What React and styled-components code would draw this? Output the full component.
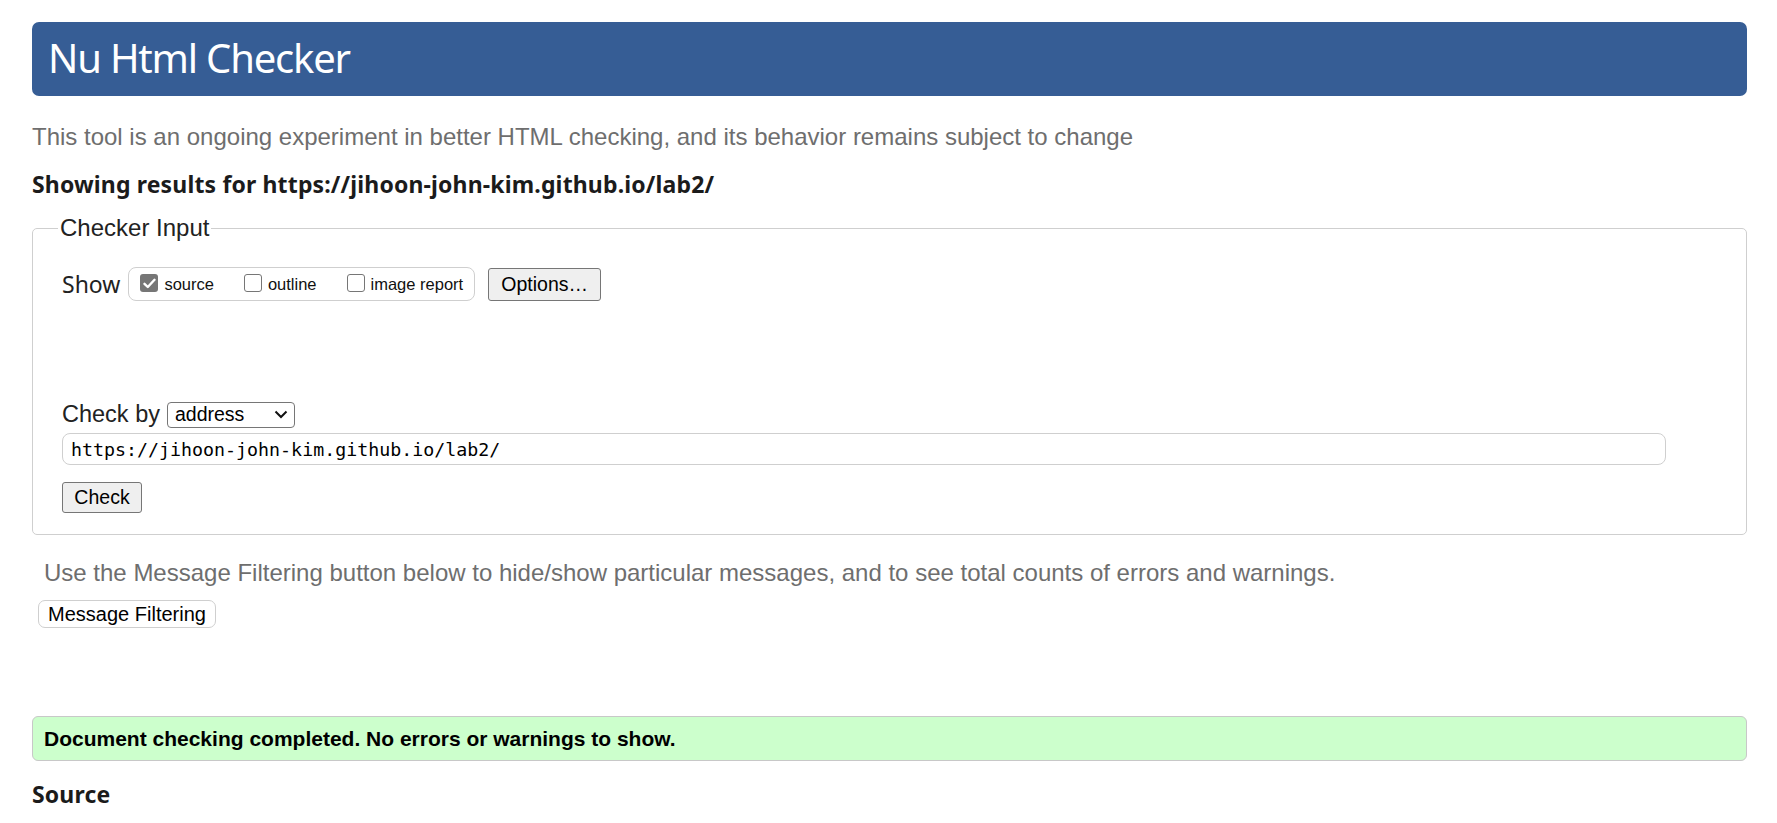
import React from "react";
import styled, { createGlobalStyle } from "styled-components";

const Global = createGlobalStyle`
  html, body { margin: 0; padding: 0; background: #fff; }
  body { font-family: "Liberation Sans", Arial, sans-serif; color: #000; }
  * { box-sizing: border-box; }
`;

const Page = styled.div`
  padding: 22px 30px 40px 32px;
`;

const Header = styled.h1`
  margin: 0;
  height: 74px;
  line-height: 72px;
  padding: 0 16px;
  background: #365d95;
  border-radius: 7px;
  color: #fff;
  font-family: "Noto Sans", "Open Sans", sans-serif;
  font-weight: 400;
  font-size: 40px;
  letter-spacing: -1.2px;
`;

const Lead = styled.p`
  margin: ${(p) => p.$mt}px 0 0 ${(p) => p.$ml || 0}px;
  font-family: "Liberation Sans", Arial, sans-serif;
  font-size: ${(p) => p.$size}px;
  line-height: ${(p) => p.$lh}px;
  color: #6e6e6e;
`;

const Heading = styled.h2`
  margin: ${(p) => p.$mt}px 0 0 0;
  font-family: "Noto Sans", "Open Sans", sans-serif;
  font-weight: 700;
  font-size: 23px;
  line-height: 30px;
  color: #1b1b1b;
  letter-spacing: 0.15px;
`;

const Fieldset = styled.fieldset`
  margin: 15px 0 0 0;
  padding: 25px 29px 21px 29px;
  border: 1px solid #cfcfcf;
  border-radius: 5px;
  min-width: 0;
`;

const Legend = styled.legend`
  margin-left: -4px;
  padding: 0 2px;
  font-family: "Liberation Sans", Arial, sans-serif;
  font-size: 24px;
  line-height: 28px;
  color: #222;
`;

const Row = styled.div`
  display: flex;
  align-items: center;
  height: ${(p) => p.$h}px;
  margin-top: ${(p) => p.$mt || 0}px;
`;

const ShowLabel = styled.span`
  font-family: "Noto Sans", "Open Sans", sans-serif;
  font-size: 23px;
  color: #222;
  margin-right: 8px;
  line-height: 30px;
`;

const OptionGroup = styled.div`
  display: flex;
  align-items: center;
  height: 34px;
  padding: 0 11px 0 11px;
  border: 1px solid #cfcfcf;
  border-radius: 8px;
`;

const OptionLabel = styled.label`
  display: flex;
  align-items: center;
  gap: 6px;
  margin-left: ${(p) => p.$ml || 0}px;
  font-family: "Liberation Sans", Arial, sans-serif;
  font-size: 16.5px;
  color: #111;
  line-height: 20px;
`;

const Box = styled.span`
  display: inline-flex;
  align-items: center;
  justify-content: center;
  width: 18px;
  height: 18px;
  border-radius: 3px;
  border: ${(p) => (p.$checked ? "none" : "1px solid #767676")};
  background: ${(p) => (p.$checked ? "#767676" : "#fff")};
  position: relative;
  top: -1px;
`;

const Button = styled.button`
  display: inline-flex;
  align-items: center;
  justify-content: center;
  width: ${(p) => p.$w}px;
  height: ${(p) => p.$h}px;
  margin: ${(p) => p.$m || 0};
  padding: 0;
  font-family: "Liberation Sans", Arial, sans-serif;
  font-size: ${(p) => p.$fs || 19.5}px;
  color: #000;
  background: ${(p) => (p.$soft ? "#fff" : "#efefef")};
  border: 1px solid ${(p) => (p.$soft ? "#cfcfcf" : "#767676")};
  border-radius: ${(p) => (p.$soft ? 7 : 3)}px;
`;

const CheckByLabel = styled.span`
  font-family: "Liberation Sans", Arial, sans-serif;
  font-size: 23.5px;
  line-height: 27px;
  color: #222;
  margin-right: 7px;
`;

const SelectBox = styled.div`
  display: flex;
  align-items: center;
  justify-content: space-between;
  width: 128px;
  height: 26px;
  padding: 0 6px 0 7px;
  border: 1px solid #767676;
  border-radius: 4px;
  background: #fff;
  font-family: "Liberation Sans", Arial, sans-serif;
  font-size: 19.5px;
  color: #000;
`;

const UrlInput = styled.div`
  display: flex;
  align-items: center;
  width: calc(100% - 51px);
  height: 32px;
  margin-top: 5px;
  padding-left: 8px;
  border: 1px solid #cfcfcf;
  border-radius: 8px;
  font-family: "DejaVu Sans Mono", "Liberation Mono", monospace;
  font-size: 18.3px;
  color: #000;
`;

const Success = styled.div`
  margin-top: 88px;
  padding: 10px 11px 9px 11px;
  background: #ccffcc;
  border: 1px solid #c8c8c8;
  border-radius: 6px;
  font-family: "Liberation Sans", Arial, sans-serif;
  font-weight: 700;
  font-size: 21px;
  line-height: 24px;
  color: #000;
`;

function Checkbox({ checked }) {
  return (
    <Box $checked={checked}>
      {checked && (
        <svg width="13" height="11" viewBox="0 0 13 11">
          <path d="M1.5 5.8 L4.8 9 L11.5 1.8" fill="none" stroke="#fff" strokeWidth="2.4" strokeLinecap="round" strokeLinejoin="round" />
        </svg>
      )}
    </Box>
  );
}

export default function App() {
  return (
    <>
      <Global />
      <Page>
        <Header>Nu Html Checker</Header>
        <Lead $mt={27} $size={24} $lh={27}>
          This tool is an ongoing experiment in better HTML checking, and its behavior remains subject to change
        </Lead>
        <Heading $mt={19}>Showing results for https://jihoon-john-kim.github.io/lab2/</Heading>
        <Fieldset>
          <Legend>Checker Input</Legend>
          <Row $h={34}>
            <ShowLabel>Show</ShowLabel>
            <OptionGroup>
              <OptionLabel>
                <Checkbox checked />
                source
              </OptionLabel>
              <OptionLabel $ml={30}>
                <Checkbox />
                outline
              </OptionLabel>
              <OptionLabel $ml={30}>
                <Checkbox />
                image report
              </OptionLabel>
            </OptionGroup>
            <Button $w={113} $h={33} $m="0 0 0 13px">Options…</Button>
          </Row>
          <Row $h={27} $mt={100}>
            <CheckByLabel>Check by</CheckByLabel>
            <SelectBox>
              <span>address</span>
              <svg width="14" height="9" viewBox="0 0 14 9">
                <path d="M1.5 1.5 L7 7 L12.5 1.5" fill="none" stroke="#111" strokeWidth="2" />
              </svg>
            </SelectBox>
          </Row>
          <UrlInput>https://jihoon-john-kim.github.io/lab2/</UrlInput>
          <Button $w={80} $h={31} $m="17px 0 0 0">Check</Button>
        </Fieldset>
        <Lead $mt={24} $ml={12} $size={24} $lh={28}>
          Use the Message Filtering button below to hide/show particular messages, and to see total counts of errors and warnings.
        </Lead>
        <Button $soft $w={178} $h={28} $fs={20} $m="13px 0 0 6px">Message Filtering</Button>
        <Success>Document checking completed. No errors or warnings to show.</Success>
        <Heading $mt={18}>Source</Heading>
      </Page>
    </>
  );
}
